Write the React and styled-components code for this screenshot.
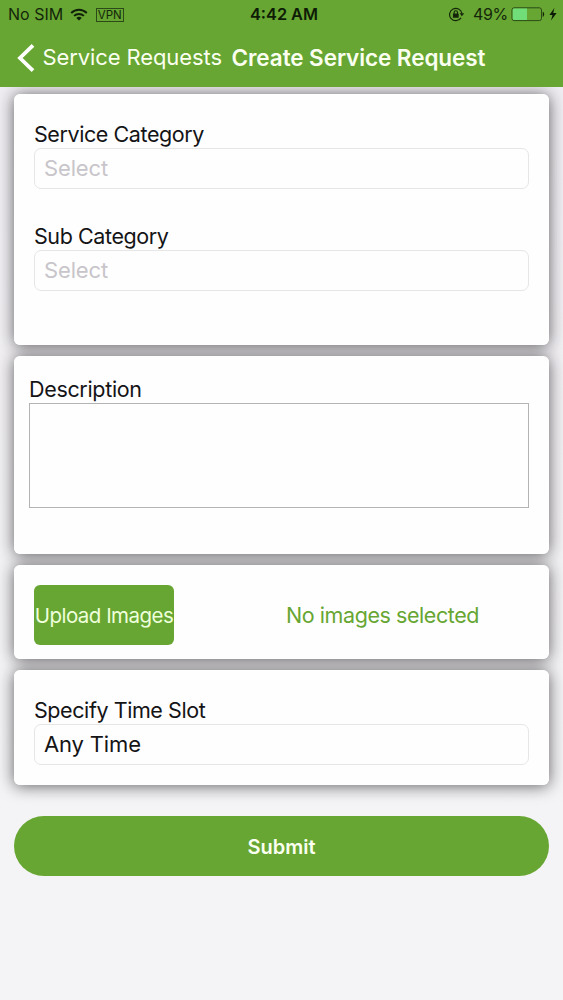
import React from "react";
import styled, { createGlobalStyle } from "styled-components";

const GREEN = "#67a632";

const GlobalStyle = createGlobalStyle`
  *, *::before { box-sizing: border-box; }
  body { margin: 0; background: #f4f3f5; }
`;

const Screen = styled.div`
  display: flex;
  flex-direction: column;
  width: 563px;
  height: 1000px;
  overflow: hidden;
  background: linear-gradient(#efedf1 0, #f4f3f5 820px);
  color: #141416;
  font-family: Inter, "Liberation Sans", sans-serif;
`;

const Header = styled.header`
  height: 87px;
  flex: none;
  background: ${GREEN};
  z-index: 1;
`;

const StatusBar = styled.div`
  display: grid;
  grid-template-columns: 1fr auto 1fr;
  align-items: center;
  height: 29px;
  padding: 0 5px 0 8px;
  color: #14260a;
`;

const StatusGroup = styled.div`
  display: flex;
  align-items: center;
  justify-content: ${(p) => (p.$end ? "flex-end" : "flex-start")};
`;

const Text = styled.span`
  font-size: ${(p) => p.$size}px;
  font-weight: ${(p) => p.$weight || 400};
  letter-spacing: ${(p) => p.$track || 0}px;
  color: ${(p) => p.$color || "inherit"};
  line-height: 1.2;
  white-space: nowrap;
`;

const Clock = styled(Text)`
  padding-left: 2px;
  color: #0e1c06;
`;

const Percent = styled(Text)`
  margin-left: 8px;
`;

const Vpn = styled.span`
  display: flex;
  align-items: center;
  justify-content: center;
  width: 28px;
  height: 14px;
  margin-left: 7.5px;
  border: 1px solid #2b4a17;
  font-size: 11.5px;
  letter-spacing: -0.1px;
  line-height: 12px;
`;

const NavBar = styled.nav`
  display: flex;
  align-items: center;
  height: 57px;
  padding-left: 17px;
  color: #fafff0;
`;

const BackLabel = styled(Text)`
  margin-left: 7.5px;
  width: 180px;
`;

const Title = styled(Text)`
  margin-left: 9px;
`;

const Form = styled.main`
  display: flex;
  flex-direction: column;
  gap: 11px;
  padding: 7px 14px 0;
  isolation: isolate;
`;

const Card = styled.section`
  position: relative;
  display: flex;
  flex-direction: ${(p) => (p.$row ? "row" : "column")};
  height: ${(p) => p.$height}px;
  padding: ${(p) => p.$pad};
  border-radius: 6px;
  background: #fefefe;

  &::before {
    content: "";
    position: absolute;
    inset: 0;
    z-index: -1;
    border-radius: 6px;
    box-shadow: 0 1px 16px rgba(20, 16, 22, 0.66);
  }
`;

const Field = styled.label`
  display: flex;
  flex-direction: column;
  height: 102px;
`;

const Label = styled(Text)`
  line-height: 27px;
`;

const Select = styled.div`
  display: flex;
  align-items: center;
  height: 41px;
  padding: 0 9px;
  border: 1px solid #e6e6e7;
  border-radius: 7px;
`;

const TextArea = styled.div`
  height: 105px;
  border: 1px solid #b3b3b4;
`;

const Upload = styled.button`
  display: flex;
  align-items: center;
  justify-content: center;
  width: 140px;
  height: 60px;
  padding: 2px 0 0;
  border: 0;
  border-radius: 6px;
  background: ${GREEN};
  color: #eeffdc;
  font-family: inherit;
`;

const UploadStatus = styled.div`
  display: flex;
  flex: 1;
  align-items: center;
  height: 60px;
  padding: 1px 0 0 112px;
`;

const Submit = styled.button`
  display: flex;
  align-items: center;
  justify-content: center;
  height: 60px;
  margin-top: 20px;
  padding: 2px 0 0;
  border: 0;
  border-radius: 30px;
  background: ${GREEN};
  color: #fafff0;
  font-family: inherit;
`;

const StatusSvg = styled.svg`
  flex: none;
  margin-left: ${(p) => p.$gap || 0}px;
`;

const WifiIcon = () => (
  <StatusSvg $gap={7} width="18" height="13" viewBox="0 0 18 13">
    <g fill="none" stroke="#10200a" strokeWidth="2">
      <path d="M1.2 5C5.6.7 12.4.7 16.8 5" />
      <path d="M4.1 7.9c2.8-2.7 7-2.7 9.8 0" />
    </g>
    <path d="M6.3 9.9c1.5-1.4 3.9-1.4 5.4 0L9 12.6z" fill="#10200a" />
  </StatusSvg>
);

const RotationLockIcon = () => (
  <StatusSvg width="17" height="15" viewBox="0 0 17 15">
    <path d="M13.9 6.4A6.2 6.2 0 1 0 13 10.9" fill="none" stroke="#14260a" strokeWidth="1.2" />
    <path d="M11.6 6.2h4.6l-2.3 3z" fill="#14260a" />
    <rect x="4.9" y="6.6" width="5.8" height="4.2" rx=".5" fill="#14260a" />
    <path d="M6.1 7V5.4a1.7 1.7 0 0 1 3.4 0V7" fill="none" stroke="#14260a" strokeWidth="1.1" />
  </StatusSvg>
);

const BatteryIcon = () => (
  <StatusSvg $gap={3} width="47" height="15" viewBox="0 0 47 15">
    <rect x="1" y=".8" width="29.5" height="12.8" rx="2.2" fill="none" stroke="#2b4a17" />
    <path d="M3 1.5h13v11.4H3a1.3 1.3 0 0 1-1.3-1.4V2.8A1.3 1.3 0 0 1 3 1.5z" fill="#70dd79" />
    <path d="M31.7 4.7c2 .5 2 4.5 0 5z" fill="#14260a" />
    <path d="M43.4 1 38.4 7.9h3.1l-1.5 5.5 5.6-7.4h-3.4z" fill="#0c1806" />
  </StatusSvg>
);

const BackIcon = () => (
  <svg width="18" height="28" viewBox="0 0 18 28">
    <path d="M16 1.4 3 14l13 12.6" fill="none" stroke="#fff" strokeWidth="3.8" />
  </svg>
);

function SelectField({ label, children, placeholder }) {
  return (
    <Field>
      <Label $size={21.5} $track={-0.42}>{label}</Label>
      <Select>
        <Text $size={22} $track={-0.15} $color={placeholder ? "#c8c5ca" : undefined}>{children}</Text>
      </Select>
    </Field>
  );
}

export default function App() {
  return (
    <Screen>
      <GlobalStyle />
      <Header>
        <StatusBar>
          <StatusGroup>
            <Text $size={16}>No SIM</Text>
            <WifiIcon />
            <Vpn>VPN</Vpn>
          </StatusGroup>
          <Clock $size={16.3} $weight={600}>4:42 AM</Clock>
          <StatusGroup $end>
            <RotationLockIcon />
            <Percent $size={16} $track={-0.3}>49%</Percent>
            <BatteryIcon />
          </StatusGroup>
        </StatusBar>
        <NavBar>
          <BackIcon />
          <BackLabel $size={22} $track={-0.1}>Service Requests</BackLabel>
          <Title $size={22.5} $weight={600} $track={-0.08}>Create Service Request</Title>
        </NavBar>
      </Header>
      <Form>
        <Card $height={251} $pad="27px 20px 0">
          <SelectField label="Service Category" placeholder>Select</SelectField>
          <SelectField label="Sub Category" placeholder>Select</SelectField>
        </Card>
        <Card $height={198} $pad="20px 20px 0 15px">
          <Label $size={21.5} $track={-0.33}>Description</Label>
          <TextArea />
        </Card>
        <Card $row $height={93.5} $pad="20px 20px 0">
          <Upload><Text $size={20.5} $track={-0.52}>Upload Images</Text></Upload>
          <UploadStatus><Text $size={21.5} $track={-0.43} $color={GREEN}>No images selected</Text></UploadStatus>
        </Card>
        <Card $height={115.5} $pad="27px 20px 0">
          <SelectField label="Specify Time Slot">Any Time</SelectField>
        </Card>
        <Submit><Text $size={20} $weight={600}>Submit</Text></Submit>
      </Form>
    </Screen>
  );
}
